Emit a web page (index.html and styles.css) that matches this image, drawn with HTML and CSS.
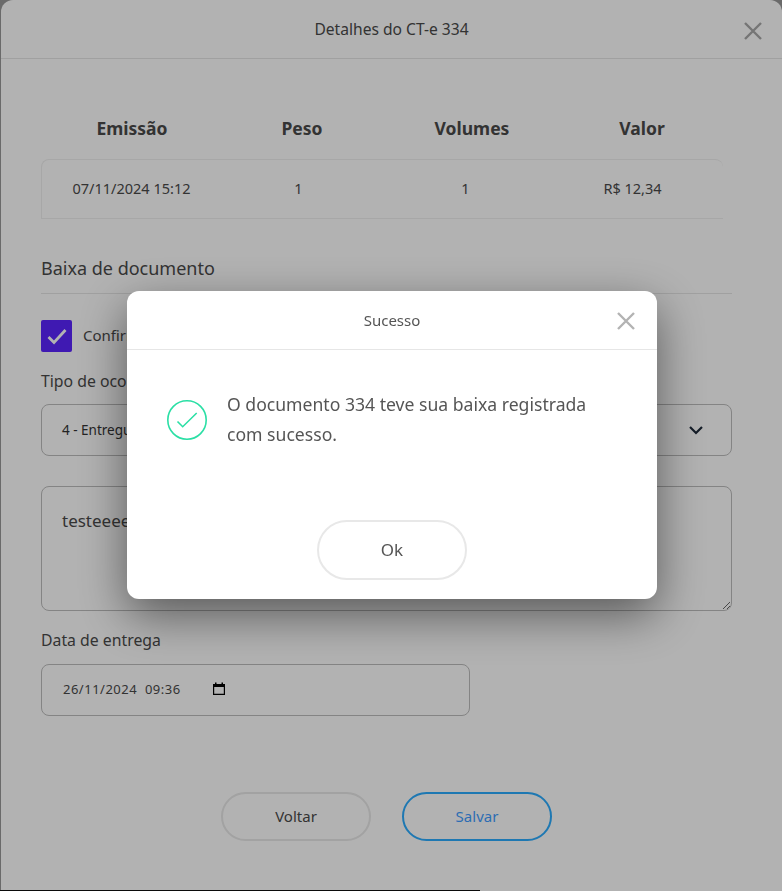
FILE: index.html
```html
<!DOCTYPE html>
<html lang="pt-BR">
<head>
  <meta charset="UTF-8" />
  <meta name="viewport" content="width=device-width, initial-scale=1.0"/>
  <title>Detalhes do CT-e 334</title>
  <link rel="stylesheet" href="styles.css">
</head>
<body>
  <div class="details">
    <header class="details-header">
      <span>Detalhes do CT-e 334</span>
      <button class="close-btn details-close" aria-label="Fechar">
        <svg viewBox="0 0 18 18" width="18" height="18"><path d="M1 1L17 17M17 1L1 17"/></svg>
      </button>
    </header>

    <div class="details-body">
      <div class="summary-head">
        <span>Emissão</span>
        <span>Peso</span>
        <span>Volumes</span>
        <span>Valor</span>
      </div>
      <div class="summary-row">
        <span>07/11/2024 15:12</span>
        <span>1</span>
        <span>1</span>
        <span>R$ 12,34</span>
      </div>

      <h2 class="section-title">Baixa de documento</h2>

      <label class="confirm">
        <span class="checkbox">
          <svg viewBox="0 0 22 22" width="22" height="22"><path d="M2.5 12L8 17.5L19.5 5"/></svg>
        </span>
        <span class="confirm-text">Confirmar entrega</span>
      </label>

      <label class="field-label">Tipo de ocorrência</label>
      <div class="select">
        <span>4 - Entregue</span>
        <svg viewBox="0 0 16 10" width="16" height="10"><path d="M2 2L8 8L14 2"/></svg>
      </div>

      <textarea class="textarea" readonly>testeeee</textarea>

      <label class="field-label">Data de entrega</label>
      <div class="date-input">
        <span>26/11/2024&nbsp;&nbsp;09:36</span>
        <svg viewBox="0 0 14 14" width="14" height="14"><path d="M3 0.5V2H1V13H13V2H11V0.5H9.5V2H4.5V0.5Z M2.2 5V11.8H11.8V5Z" fill-rule="evenodd"/></svg>
      </div>

      <div class="details-actions">
        <button class="pill">Voltar</button>
        <button class="pill pill-primary">Salvar</button>
      </div>
    </div>
  </div>
  <div class="bottom-strip"></div>

  <div class="overlay">
    <div class="dialog">
      <header class="dialog-header">
        <span>Sucesso</span>
        <button class="close-btn dialog-close" aria-label="Fechar">
          <svg viewBox="0 0 18 18" width="18" height="18"><path d="M1 1L17 17M17 1L1 17"/></svg>
        </button>
      </header>
      <div class="dialog-body">
        <svg class="success-icon" viewBox="0 0 40 40" width="40" height="40">
          <circle cx="20" cy="20" r="19.2"/>
          <path d="M10.5 21.5L15.7 26.7L29.7 13"/>
        </svg>
        <p>O documento 334 teve sua baixa registrada com sucesso.</p>
      </div>
      <div class="dialog-actions">
        <button class="pill pill-ok">Ok</button>
      </div>
    </div>
  </div>
</body>
</html>
```

FILE: styles.css
```css
* { box-sizing: border-box; }

html, body { height: 100%; }

body {
  margin: 0;
  background: #999;
  color: #4a4a4a;
  font-family: "Noto Sans", "Open Sans", sans-serif;
  font-size: 15px;
  overflow: hidden;
}

button {
  font: inherit;
  background: none;
  cursor: pointer;
}

.details {
  width: 781px;
  height: 890px;
  margin-left: 1px;
  background: #fff;
  border-radius: 12px 12px 0 0;
}

.bottom-strip {
  height: 1px;
  background: linear-gradient(90deg, #111 480px, #fff 480px);
}

.details-header {
  position: relative;
  height: 59px;
  display: flex;
  align-items: center;
  justify-content: center;
  border-bottom: 1px solid #e6e6e6;
  font-size: 15.6px;
}

.close-btn {
  position: absolute;
  border: none;
  padding: 0;
  line-height: 0;
}
.close-btn path { fill: none; stroke: #b3b3b3; stroke-width: 2.4; }
.details-close { right: 20px; top: 22px; }
.details-close path { stroke: #a8a8a8; }
.dialog-close { right: 22px; top: 21px; }

.details-body { padding: 57px 50px 0 40px; }

.summary-head,
.summary-row {
  display: grid;
  text-align: center;
}

.summary-head {
  grid-template-columns: repeat(4, 170px);
  padding-left: 6px;
  font-size: 17.5px;
  font-weight: 700;
  height: 43px;
}

.summary-row {
  grid-template-columns: repeat(4, 167px);
  width: 682px;
  height: 60px;
  padding: 0 0 3px 6px;
  align-items: center;
  border: 1px solid #efefef;
  border-right: none;
  border-radius: 8px 8px 0 0;
  font-size: 14.5px;
}

.section-title {
  margin: 38px 0 0;
  padding-bottom: 13px;
  font-size: 18px;
  font-weight: 400;
  line-height: 23px;
  border-bottom: 1px solid #e6e6e6;
}

.confirm {
  display: flex;
  align-items: center;
  gap: 11px;
  margin-top: 26px;
  height: 32px;
}
.confirm-text { margin-bottom: 3px; }

.checkbox {
  width: 31px;
  height: 32px;
  display: flex;
  align-items: center;
  justify-content: center;
  background: #5b24ff;
  border-radius: 2px;
}
.checkbox path { fill: none; stroke: #fff; stroke-width: 2.8; }

.field-label {
  display: block;
  font-size: 15.8px;
  line-height: 22px;
}

.confirm + .field-label { margin-top: 18px; }

.select {
  display: flex;
  align-items: center;
  justify-content: space-between;
  height: 52px;
  margin-top: 12px;
  padding: 0 27px 0 20px;
  border: 1px solid #bdbdbd;
  border-radius: 8px;
  font-size: 13.5px;
  color: #333;
}
.select path { fill: none; stroke: #1e2a3a; stroke-width: 2.2; }

.textarea {
  display: block;
  width: 100%;
  height: 125px;
  margin: 30px 0 18px;
  padding: 22px 20px;
  border: 1px solid #bdbdbd;
  border-radius: 8px;
  outline: none;
  font: inherit;
  font-size: 17px;
  color: #4a4a4a;
  background: #fff;
}

.date-input {
  display: flex;
  align-items: center;
  gap: 31px;
  width: 429px;
  height: 52px;
  margin-top: 13px;
  padding: 0 21px 2px;
  border: 1px solid #bdbdbd;
  border-radius: 8px;
  font-size: 13px;
  letter-spacing: 0.5px;
}
.date-input svg { fill: #000; }

.details-actions {
  display: flex;
  justify-content: center;
  gap: 31px;
  margin-top: 76px;
}

.pill {
  width: 150px;
  height: 49px;
  padding: 0 0 2px;
  border: 2px solid #e8e8e8;
  border-radius: 25px;
  color: #4a4a4a;
}
.pill-primary { border-color: #2cacff; color: #3f9dff; }

.overlay {
  position: fixed;
  inset: 0;
  background: rgba(0, 0, 0, 0.3);
}

.dialog {
  position: absolute;
  left: 127px;
  top: 291px;
  width: 530px;
  height: 308px;
  background: #fff;
  border-radius: 12px;
  box-shadow: 0 16px 48px rgba(0, 0, 0, 0.5);
}

.dialog-header {
  position: relative;
  height: 59px;
  display: flex;
  align-items: center;
  justify-content: center;
  border-bottom: 1px solid #e6e6e6;
  color: #555;
}

.dialog-body {
  display: flex;
  align-items: flex-start;
  gap: 20px;
  padding: 50px 40px 0;
  height: 170px;
}
.dialog-body p {
  margin: -11px 0 0;
  max-width: 375px;
  font-size: 17.6px;
  line-height: 30px;
  color: #555;
}
.success-icon { flex: none; }
.success-icon circle,
.success-icon path { fill: none; stroke: #2bdfa5; stroke-width: 1.6; }

.dialog-actions { display: flex; justify-content: center; }
.pill-ok { height: 60px; border-radius: 30px; font-size: 17px; color: #555; }
```
